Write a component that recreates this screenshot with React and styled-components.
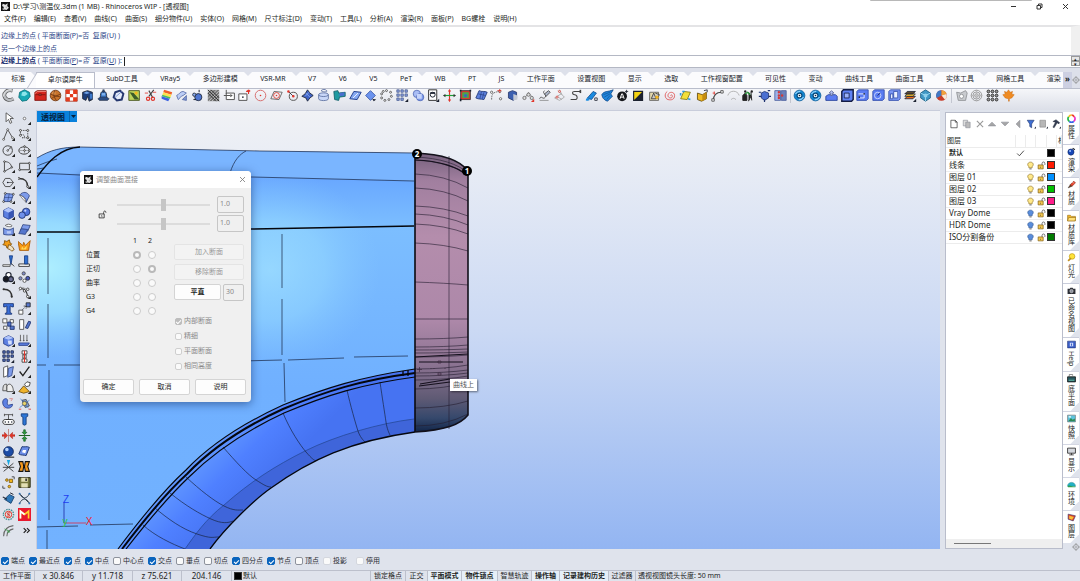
import React, { useState } from "react";
import styled, { createGlobalStyle, css } from "styled-components";

const K = "#1c2230";
const B = "#3f62c4";
const L = "#8fb0f4";
const G = "#8b8f98";
const R = "#e0352b";
const Y = "#f3b51d";
const W = "#fff";

// circle as path data
const o = (x, y, r) =>
  `M${x - r} ${y}a${r} ${r} 0 1 0 ${2 * r} 0a${r} ${r} 0 1 0 ${-2 * r} 0z`;
const dots = (list, r = 1.2) => list.map(([x, y]) => o(x, y, r)).join("");
const grid3 = dots(
  [3, 8, 13].flatMap((x) => [3, 8, 13].map((y) => [x, y])),
  1.7
);

// every icon is a list of [path, fill, stroke, stroke width]
const ICONS = {
  // standard toolbar
  pipe: [["M13 2C6 0 2 5 3 9s6 6 11 3", null, "#555", 4.6], ["M13 2C6 0 2 5 3 9s6 6 11 3", null, "#b9bcc0", 3], ["M12 1C6 0 2 5 2 9", null, "#eee", 1]],
  gem: [["M8 1l6 3 1 5-4 5-6 1-4-5 1-6z", "#19a9b4", "#0c6f79", 1], ["M5 4l4-1 3 3-4 3-4-1z", "#8be5ea"]],
  chest: [["M1 4l3-2h11v12H1z", "#d5261f", "#7d120e", 1], ["M1 6l3-3h11", null, "#f49a8e", 1], ["M2 7h12M6 6h3v2H6z", "#ffb5a8", "#7d120e", 1]],
  basketball: [[o(8, 8, 6.5), "#c8732a", "#6b3410", 1], [o(6, 5, 2), "#e9a25c"], ["M2 6c4 3 8 3 12 0M7 2c-2 4-1 8 2 12M3 12c3-3 7-4 11-2", null, "#6b3410", 1]],
  checker: [["M1 1h14v14H1z", W, "#9e2b18", 1], ["M1 1h5v5H1zM10 1h5v5h-5zM6 6h4v4H6zM1 10h5v5H1zM10 10h5v5h-5z", "#e33a1d"]],
  cylinders: [["M2 4l6-2 6 2v9l-4 2-2-6-2 5-4-2z", "#1d3f7c", K, 1], ["M3 5l4-2 4 2-4 1z", "#71a3e8"], ["M11 6h3v6h-3z", "#3c78ca"]],
  bell: [["M4 13c0-9 1-10 4-10s4 1 4 10z", "#3a76c6", K, 1], ["M1 12l3-2h8l3 2-2 2H3zM7 1h2v3H7z", "#2b4d86", K, 0.6], ["M6 5h4v3H6z", "#7fb1ec"]],
  ring: [["M4 4l6-2 4 4-2 7-6 1-4-4z", "#e5ebf8", "#26386f", 2.4], ["M3 11l9-8", null, "#6f8bd0", 1]],
  picture: [["M1 2h13v12H1z", "#bdd45c", "#3b4a12", 1], ["M2 4l5 1 7 8H8z", "#3c5c29"], [o(10, 5, 2), Y]],
  cut: [["M12 1L6 9M6 2l5 9", null, "#444", 1.4], [dots([[5, 12], [11, 12]], 2), null, R, 1.4], ["M1 5h4M11 4h4", null, R, 1]],
  rainbow: [["M5 1l10 3-1 3L4 4z", "#f0602a"], ["M4 4l10 3-1 3L3 7z", "#ffe14b"], ["M3 7l10 3-1 2L2 9z", "#4cc25a"], ["M2 9l10 3-2 3-8-3z", "#3b62e0"]],
  surf: [["M2 8c3-1 4-5 8-5l4 2-4 3c-3 0-4 4-6 5z", "#bccdf5", "#5369a6", 1], ["M9 13l5-5v6z", "#7f96d2", "#5369a6", 1]],
  balls: [[o(9, 10, 4.4), "#4f76d2", K, 1], [o(4, 7, 2), L, K, 1], ["M10 1v3M3 13h3", null, K, 1.2]],
  halftone: [["M1 1h14v14H1z", "#777"], ["M1 4l3-3M1 8l7-7M1 12L12 1M2 15L15 2M6 15l9-9M10 15l5-5", null, W, 0.7], ["M1 5l10 10M1 1l14 14M5 1l10 10", null, "#222", 1]],
  arrowBox: [["M4 5h10v8H4z", W, "#555", 1.2], ["M1 8h8M4 1v5", null, "#555", 1.2], ["M9 6l3 2-3 2z", "#555"]],
  scaleBox: [["M1 6h10v8H1z", W, "#555", 1.2], ["M13 6V1M13 1l-2 2M13 1l2 2M10 3h4", null, R, 1.4], [o(6, 10, 1), K]],
  circleRed: [[o(8, 8, 6.5), null, "#d66e6e", 1.2], [o(8, 8, 1), R]],
  diamondCircle: [["M5 3l10 1-4 9-10-1z", null, "#555", 1], [o(8, 8, 3.6), null, R, 1], [o(8, 8, 1), R]],
  circleDot: [[o(9, 9, 5), null, "#555", 1.2], ["M3 3l6 6", null, K, 1], [dots([[3, 3], [9, 9]], 1.6), R]],
  knot: [["M8 1l3 4 4 3-4 3-3 4-2-4-5-2 4-3z", B, K, 1], ["M6 5l5 5M5 9l5-5", null, L, 1]],
  cup: [["M2 7c0-3 12-3 12 0v5c0 3-12 3-12 0z", "#c9d7f8", "#566a9c", 1], ["M2 7c0 3 12 3 12 0M5 2c2-2 5-2 7 0s-5 2-7 0", null, "#566a9c", 1]],
  pipeTeal: [["M1 3l5-1 1 3 8-1v5l-7 1-1 4-5-1z", "#1f9aa0", "#135c66", 1], ["M8 5l6-1v4l-6 1z", "#4a6fd0"]],
  plane: [["M6 3l9 1-5 9-9-1z", "#85a8f2", "#24408c", 1.2], ["M5 11l6-6", null, W, 1]],
  diamond: [["M8 2l6 6-6 6-6-6z", "#6b93ee", "#3452a2", 1], ["M10 12l5 1-3 2z", K]],
  dotRing: [[dots([[8, 2], [13, 4], [14, 9], [11, 13], [6, 14], [2, 11], [2, 6], [4, 3]], 1.2), W, "#444", 1]],
  grid: [["M1 1h3v3H1zM6 1h3v3H6zM11 1h3v3h-3zM1 6h3v3H1zM6 6h3v3H6zM11 6h3v3h-3zM1 11h3v3H1zM6 11h3v3H6z", "#8fa5e2", "#35487e", 0.8], ["M15 12v4h-4z", K]],
  blobs: [[o(6, 6, 4.5), "#a9bdf4", "#5067b4", 1], [o(10, 10, 4.5), "#7f9cec", "#5067b4", 1], ["M6 6h6v6H6z", "#c6d4fa"]],
  portrait: [["M2 1h10v13H2z", W, "#333", 1.2], [o(7, 7, 3), null, K, 1.2], ["M4 4h6v2H4z", K], ["M15 12v4h-4z", K]],
  cross: [["M8 1v14", null, R, 1.4], ["M1 8h14", null, "#1c9f36", 1.4], ["M8 0l2 3H6zM8 16l2-3H6z", R], ["M0 8l3-2v4zM16 8l-3-2v4z", "#333"]],
  frame: [["M2 2h12v11H2z", "#d93b2d", "#333", 1], ["M4 4h8v7H4z", "#48a74d"], [o(8, 8, 2), "#3f62c4"], ["M1 1h2v2H1zM13 1h2v2h-2zM1 12h2v3H1z", K]],
  patch: [["M5 2c4 2 6 0 10 2l-4 9c-4-1-6 0-10-2z", "#5c80dc", "#1e3575", 1], ["M4 6l9 2M8 3L6 12M11 4l-2 8", null, "#1e3575", 0.7]],
  curve: [["M2 13c0-8 2-9 10-10", null, "#555", 1, "2 1"], [dots([[2, 4], [12, 3], [13, 12]], 1.4), W, "#555", 1], ["M9 2h5M12 0v5", null, R, 1]],
  cubeGrey: [["M3 4l5-2 5 2v7l-4 3-6-3z", "#3d60b0", "#26376b", 1], ["M9 6l5 2v5l-5 1z", "#c5cad4"]],
  beads: [["M3 12l5-8 5 7", null, "#888", 1], [dots([[3, 11], [8, 7], [12, 11]], 2), "#ddd", "#666", 1], ["M15 12v4l-4 0z", R]],
  pencil: [["M2 12c2-5 4 2 7-2s-5-4-1-8", null, "#555", 1.2], ["M8 6l5-4 2 2-5 5z", "#aab4c8", "#444", 1], ["M2 14h11", null, "#888", 1]],
  mesh: [["M2 11l8-5 4 4-6 4zM6 2l4 4M8 1l3 6M5 9l6 4", null, "#a2a2a2", 1], [dots([[8, 3], [5, 10]], 1.3), "#ddd", R, 0.8]],
  bend: [["M14 3H7c-4 0-3 4 0 4s5 6 0 6H2", null, "#444", 1.3], ["M13 1h2v4h-2z", "#444"]],
  paint: [["M3 11l7-8 4 2-6 8z", "#1a8be0", "#0d4a8d", 1], ["M1 14c0-3 2-4 4-2s-1 3-4 2z", "#1a8be0"], ["M12 11h3v3h-3z", W, K, 1]],
  fan: [["M1 7C4 2 8 4 15 1L12 6l2 3-6 6C3 13 2 11 1 7z", "#1f86dd", "#0e4687", 1], ["M3 7l8-3M4 10l7-4M7 13l4-5", null, "#0e4687", 0.7]],
  ballA: [[o(7.5, 9, 6), "#16181d"], ["M5 12l2-6h1l2 6M6 10h3", null, W, 1.2], ["M13 1v4M11 3h4", null, K, 1]],
  half: [["M2 3h11v11H2z", "#f4d313", K, 1.4], ["M13 3v11H2z", K]],
  kit: [["M2 4h11v10H2z", "#e4d9ae", "#555", 1], ["M4 12l3-7 3 7zM9 5l5 2-3 5", "#c9c9c9", "#333", 1], [o(11, 10, 2), Y]],
  spiral: [["M8 8c1-2 3 0 2 2s-6 1-5-3 8-4 8 1-4 6-8 5-5-7-1-10", null, "#e05656", 1.1]],
  note: [["M6 3l8 1-4 9-8-1z", "#f2e03a", "#7c7211", 1], ["M2 5v3M4 3h3", null, "#2e9fe0", 2], ["M11 12l3 1", null, "#2e9fe0", 2]],
  box: [["M3 5l6 2 5-3v8l-6 3-5-2z", "#f0bb22", "#5d460c", 1], ["M9 7l5-3v8l-5 3z", "#c58c10"], ["M11 2l4-1v3", null, K, 1]],
  arc: [["M3 14C3 7 6 4 13 4", null, "#444", 1.4], ["M2 5h3M4 3v4", null, R, 1], ["M12 2h3v3h-3zM1 12h3v3H1z", W, "#444", 1]],
  dome: [["M1 8c2-7 12-7 14 0M5 13c2-2 4-2 6 0", null, "#a8a8a8", 1]],
  figures: [["M1 14V8l3-3 2 3v6zM8 4l3 5-3 6M11 4l1 10", "#222", "#222", 1.2], ["M4 6l3-2 3 3", null, "#2c9a3c", 1.6], [dots([[4, 3], [12, 3]], 1.5), "#222"]],
  cubeArrows: [["M4 5l4-2 5 2v6l-5 3-4-3z", "#4a6fd2", "#1e3270", 1], ["M1 4h3M12 2h3M1 9h3M13 9h3M8 13v3", null, "#1e3270", 1.5]],
  panels: [["M1 2h7v12H1z", "#9db4ea", "#4b5f9c", 1], ["M9 2h6v12H9z", "#6a80ba", "#4b5f9c", 1], [dots([[10, 8], [6, 8], [6, 11], [6, 4]], 1.5), "#d13a3a"]],
  swirl: [[o(8, 8, 6.6), "#1285cf", "#0b5c9a", 1], [o(8, 8, 3), "#e9f6ff", "#084878", 1.4], ["M3 6c2-3 4-3 6-3M13 10c-2 3-4 3-6 3", null, "#8fd4ff", 1.4], [o(8, 8, 1), K]],
  tray: [["M1 9l3-2h9l2 2v5H1z", "#5a7cf2", "#233c94", 1], ["M8 2l3 3H9v3H7V5H5z", "#b6c4f5", "#5b6796", 1]],
  blueBox: [["M1 3l2-2h12v12l-2 2H1z", "#5f82f5", "#141d45", 1.8], ["M4 5h6v6H4z", "#9ab1fa", "#141d45", 1]],
  blueStep: [["M1 3l2-2h12v11l-2 2H1z", "#5a7cf2", "#2f4aa8", 1], ["M3 6h7v5H4", null, W, 1], [dots([[10, 6], [4, 10]], 1), K]],
  blueCircle: [["M1 3l2-2h12v11l-2 2H1z", "#5a7cf2", "#2f4aa8", 1], [o(7, 8, 4), null, "#dbe3ff", 1], ["M7 8l3-3", null, "#16235c", 1.2]],
  blueGlass: [["M1 3l2-2h12v11l-2 2H1z", "#7b97f5", "#2f4aa8", 1], ["M7 3h5v8H7zM3 6h3v6H3z", "#eaf0ff", "#2f4aa8", 1]],
  stack: [["M4 9h10l-3 3H1z", "#e96a1c", K, 1], ["M4 6h10l-3 3H1z", "#f5c332", K, 1], ["M4 3h10l-3 3H1z", "#5b4a33", K, 1], ["M15 12v4h-4z", K]],
  hex: [["M8 1l6 4v6l-6 4-6-4V5z", "#3f97c4", "#1b5c80", 1], ["M8 8l6-3M8 8L2 5M8 8v7", null, "#a7e0f6", 1], [o(8, 8, 2.5), "#8fd0ec"]],
  pie: [[o(8, 8, 6.5), "#c63d2a"], ["M8 8V1.5A6.5 6.5 0 0 0 2 11z", "#4078c4"], ["M8 8V1.5A6.5 6.5 0 0 1 14 6z", "#f0a23c"], ["M8 8l6-2a6 6 0 0 1-2 7z", "#f7e9d7"]],
  folderGrey: [["M2 4l5 1 6-3 2 3-2 9H4z", "#c9cbcf", "#8a8c90", 1], [o(8, 9, 2.5), W, "#8a8c90", 1]],
  ripples: [[o(8, 8, 6.5), null, "#8b8b8b", 1], [o(8, 8, 4.4), null, "#8b8b8b", 1], [o(8, 8, 2.2), null, "#8b8b8b", 1], ["M8 1v14M1 8h14", null, "#aaa", 0.6]],
  nine: [[grid3, "#999", "#333", 1.2]],
  maple: [["M8 1l2 3 3-1-1 3 3 1-3 4-3 1v3H8v-3l-4-1-3-4 3-1-1-3 3 1z", "#ef8b22", "#c86a10", 0.6]],

  // left toolbar
  pointer: [["M5 1v11l3-3 2 5 2-1-2-5h4z", W, "#444", 1]],
  dot: [[o(8, 8, 1.6), W, "#666", 1]],
  polyline: [["M2 14L7 2l6 10", null, "#444", 1.1], [dots([[2, 14], [7, 2], [13, 12]]), W, "#444", 0.9]],
  cpCurve: [["M3 3h9v9H5c4 0 5-4-2-4z", null, "#444", 1, "2 1"], [dots([[3, 3], [12, 3], [12, 12], [3, 9]]), W, "#333", 1]],
  circle: [[o(7, 8, 5.8), null, "#444", 1.2], ["M7 8l4-4", null, "#444", 1], [dots([[7, 8], [11, 4]], 1), W, "#444", 1]],
  ellipse: [["M1 8c0-6 13-6 13 0S1 14 1 8z", null, "#444", 1.2], ["M1 8h13M8 3v10", null, "#888", 0.8], [dots([[8, 8], [8, 3], [14, 8]], 1), W, "#333", 1]],
  sector: [["M3 14V2c6 0 8 3 9 7z", null, "#444", 1.1], [dots([[3, 2], [3, 14], [12, 9]], 1), W, "#333", 1]],
  rect: [["M2 4h12v8H2z", null, "#444", 1.2], [dots([[2, 12], [14, 4]], 1.1), W, "#333", 1]],
  polygon: [["M4 3h6l4 5-4 5H4L1 8z", null, "#444", 1.1], ["M7 8h7", null, "#444", 0.9], [o(7, 8, 1), K]],
  fillet: [["M1 3c8 0 11 3 11 11", null, "#333", 2], [dots([[1, 3], [12, 13]], 1.2), W, "#333", 1]],
  surfPts: [["M4 3l10 1-3 9-9 0z", "#7d9bea", "#2d427f", 1], ["M3 8h10M9 3L7 13", null, "#2d427f", 0.7], [dots([[4, 3], [14, 4], [2, 13], [11, 13]], 1.1), W, "#333", 1]],
  surfEdge: [["M2 5c4-5 10-4 12 1l-4 8c1-5-3-7-8-9z", "#7d9bea", "#2d427f", 1], ["M2 5c4 1 7 4 8 9l-4-4z", W, "#555", 0.8]],
  cube: [["M2 4l6-3 6 3v8l-6 3-6-3z", "#5d80e2", "#233a86", 1], ["M2 4l6-3 6 3-6 3z", "#b1c5fa"], ["M8 7l6-3v8l-6 3z", "#3655b4"]],
  spheres: [[o(10, 6, 4.6), "#5073da", "#172a66", 1], [o(5, 10, 4), "#6f90ea", "#172a66", 1], [o(9, 4.5, 1.3), "#c5d3fc"]],
  vase: [["M2 6c4 3 8 3 12 0v8c-4 1-8 1-12 0z", "#7d9bea", "#2d427f", 1], ["M4 3c2-2 6-2 8 0s-6 2-8 0", W, "#555", 1], ["M6 10h5v3H6z", "#b8c9f6"]],
  twoPlanes: [["M6 2l9 1-3 7-9-1z", "#7d9bea", "#2d427f", 1], ["M4 7l8 1-3 6-8-1z", "#5576cd", "#2d427f", 1]],
  gears: [["M3 2l3 1 3-2 1 4 2 1-3 3-3 2-1-3-4-1 2-2z", "#f39c16", "#7a4c06", 1], ["M8 7l3 1 2 2 2 3-3 2-2-2-3-1z", "#f0e2c4", "#7a4c06", 1]],
  explode: [["M2 14L0 3l6 5 1-4 2 4 6-6-2 12z", "#f89a16", "#a65600", 1], ["M4 13l1-4 2 3 4-4-1 5z", "#ffd95a"]],
  trim: [["M1 12h9v2H1z", W, "#444", 1], ["M9 1h4l-2 11z", "#2f6fd2", "#143a80", 1], ["M11 10l4 4", null, "#444", 1.2]],
  split: [["M1 11h13v3H1z", W, "#333", 1.1], ["M8 1h4v10H8z", "#2f6fd2", "#143a80", 1]],
  joinDark: [[o(8, 5, 3.2), W, K, 1.4], [o(5, 10, 3.4), "#16181f", K, 1.4], [o(11, 10, 3), "#6d6f96", K, 1.4]],
  joinLight: [[dots([[7, 3], [3, 9]], 2), "#7f8cc8", "#444", 1], [o(8, 12, 2), W, "#444", 1], [o(12, 9, 2.4), "#4a5ab8", K, 1]],
  arcDark: [["M2 4c7 0 10 3 10 10", null, "#333", 1.8], [dots([[2, 4], [12, 13]], 1.3), "#333"]],
  arcHandles: [["M3 3c7 1 8 4 9 11", null, "#333", 1.4], ["M1 6l5-4M6 2l7 3", null, "#777", 0.9], [dots([[3, 3], [8, 6], [12, 13], [12, 4]], 1.5), W, "#333", 1]],
  text: [["M2 2h12v4h-2l-1-1H10v8l2 1v1H4v-1l2-1V5H5L4 6H2z", "#3b6fd8", "#132c6c", 1]],
  move: [["M1 10h5v5H1z", W, "#444", 1], ["M10 1h5v5h-5z", "#5576cd", "#222", 1], ["M5 10l5-5M7 5h3v3", null, K, 1, "1.5 1"]],
  arrayBlocks: [["M1 1h5v5H1zM10 2h4v4h-4zM2 10h4v4H2z", W, "#444", 1], ["M7 5h4v5H7zM10 10h5v4h-5z", "#5576cd", "#1b2d66", 1]],
  book: [["M2 2h5v12H2z", W, "#444", 1], ["M9 12l4-8 3 1-4 8z", "#5576cd", "#1b2d66", 1]],
  chamfer: [["M2 5l6-3 6 3v7l-6 3-6-3z", "#5d80e2", "#233a86", 1], ["M2 5l6-3 6 3-6 2z", "#b1c5fa"], ["M7 8h5v5H8z", "#d4dffc"]],
  project: [["M1 11h13l-2 3H1z", "#5d80e2", "#233a86", 1], ["M3 1v8M7 1v8M11 1v8M2 8h2M6 8h2M10 8h2", null, "#555", 1]],
  array: [["M1 1h3v3H1zM6 1h3v3H6zM11 1h3v3h-3zM1 6h3v3H1zM6 6h3v3H6zM11 6h3v3h-3zM1 11h3v3H1zM6 11h3v3H6z", "#5674c4", "#18244a", 1], ["M15 12v4h-4z", K]],
  align: [["M5 1h6v4H5zM6 6h4v4H6zM5 11h6v4H5z", W, "#333", 1], ["M8 1v14", null, R, 1.4]],
  box2: [["M2 3l5-2v12l-5 2z", W, "#444", 1], ["M8 4l6-2-2 11-5 2z", "#7d9bea", "#2d427f", 1]],
  check: [["M2 8l4 5L14 2", null, "#222", 1.6]],
  bool: [["M1 12c0-8 2-8 5-8v8z", "#ddd", "#444", 1], ["M6 13V7c2-6 8-3 8 6z", "#eee", "#444", 1]],
  cone: [["M1 13l6-7 7 7-7 2z", "#eeb32c", "#69480a", 1], ["M8 4l3-3 4 1-1 4-4 1z", W, "#333", 1]],
  horn: [["M4 2c6 0 0 7 4 8l5-1c0 5-7 6-10 3s-3-9 1-10z", "#5d80e2", "#233a86", 1], ["M9 2h4l-2 3M2 13l2 1", null, "#d98080", 1]],
  gumball: [["M5 4l5-1 4 8-5 2z", "#7e9bd0", "#444", 1], ["M2 13L14 4M3 2l10 12", null, "#2b6fd0", 0.8], [o(8, 8, 2.6), "#e7d36a", "#555", 1], ["M1 15h3M13 15h3", null, R, 1]],
  belt: [["M4 8h8c4 0 4 6 0 6H4c-4 0-4-6 0-6z", W, "#333", 1.2], ["M3 2h10M8 2v6M3 1v3M13 1v3", null, "#444", 1], [dots([[4, 11], [12, 11], [8, 11]], 0.9), K]],
  bolt: [["M4 1h8v3l-2 1v9l-2 1-2-1V5L4 4z", "#2d76d6", "#123a78", 1]],
  squeeze: [["M8 0v16", null, "#b8766f", 1], ["M0 7h3V4l4 4-4 4V9H0zM16 7h-3V4L9 8l4 4V9h3z", "#e33427", "#9d1a10", 0.5]],
  spread: [["M1 8h14", null, "#1d5c20", 1.2], ["M7 1h2v3h2L8 7 5 4h2zM7 15h2v-3h2L8 9l-3 3h2z", "#2b9f3c", "#14591f", 0.8]],
  sphere: [[o(8, 8, 6), "#1b4ba6", "#0a1f50", 1], [o(6, 5.5, 2.2), "#b8d4ff"], ["M3 15h12", null, "#444", 1.6]],
  flag: [["M5 2c3 1 6-1 9 1l-4 10c-3-1-6 0-9-2z", "#6b8de8", "#203672", 1.2], ["M6 6l4 0-1 4-4-1z", W]],
  explodeMesh: [["M8 9L2 4M8 9l6-5M8 9L2 14M8 9l6 5M1 9h14", null, "#333", 1.1], ["M6 0h4l-2 7z", "#1aa7e0"]],
  peppers: [["M1 2h5l1 6-1 6H1l2-6zM9 2h5l-2 6 2 6H9l-1-6z", "#f5981d", "#111", 1.3]],
  points: [[dots([[6, 5], [9, 13]], 1.6), Y, "#7a5a10", 1], ["M9 4h4v4H9z", Y, "#7a5a10", 1], ["M1 12v3h3M12 1h3v3", null, "#333", 1]],
  floppy: [["M1 2h14v12H1z", "#77773e", "#2c2c14", 1.2], ["M4 2h8v5H4zM4 9h8v5H4z", "#e3dfb4"], ["M9 3h2v3H9z", "#333"]],
  net: [["M3 9l6-6 6 3-4 8z", "#2f78b8", "#153c66", 1], ["M1 6l5 3", null, K, 1.4], ["M10 1l4 2", null, K, 1.2]],
  spider: [["M2 2c3 7 9 7 12 0M2 14c3-7 9-7 12 0M3 3l10 10", null, "#345", 1.2], [dots([[2, 2], [14, 2], [2, 14], [14, 14]], 1.2), "#2d6fb5"]],
  target: [[o(8, 8, 6.3), "#d9e8ea", "#4d8f96", 1.6, "2 1"], [o(8, 8, 4), null, R, 1.2], ["M10 6H7v2h2v2H6", null, R, 1.2]],
  mLogo: [["M0 0h16v16H0z", "#e8192f"], ["M3 13V4l5 4 5-4v9", null, "#ffd52c", 2], ["M3 13V4l5 4", null, W, 2]],
  offset: [["M2 15C2 7 6 3 14 2M6 15c0-5 3-8 8-9", null, "#666", 1.3], ["M3 6l7 4M9 10l-3 0M9 10l-2-3", null, "#3b9a4c", 0.9]],
  more: [["M7 5l3 3-3 3M11 5l3 3-3 3", null, "#222", 1.4]],

  // panels and side tabs
  page: [["M3 2h7l3 3v9H3zM10 2v3h3", W, "#333", 1.1]],
  copy: [["M2 2h7v9H2z", "#ddd", G, 1], ["M6 5h7v9H6z", "#bbb", G, 1]],
  cross2: [["M3 3l10 10M13 3L3 13", null, "#9a9a9a", 1.8]],
  up: [["M2 11l6-6 6 6z", "#a6a6a6", G, 1]],
  down: [["M2 5h12l-6 6z", "#a6a6a6", G, 1]],
  left: [["M11 2v12L5 8z", "#a6a6a6", G, 1]],
  filter: [["M2 2h11L9 8v6l-3-2V8z", "#3f6fd4", "#1f3670", 1], ["M16 12v3h-3z", K]],
  sheet: [["M3 2h9v11H3z", "#b7b7b7", "#888", 1], ["M16 12v3h-3z", K]],
  hammer: [["M3 4l5-3 6 5-2 2-2-2-5 8-2-1 4-8z", "#333c52", K, 0.6], ["M16 12v3h-3z", K]],
  bulbOn: [["M5 10C1 6 4 2 8 2s7 4 3 8v2H5z", "#ffe98a", "#8a6a1a", 1.1], ["M6 13h4v2H6z", "#777"]],
  bulbOff: [["M5 10C1 6 4 2 8 2s7 4 3 8v2H5z", "#5a8ddb", "#30568f", 1.1], ["M6 13h4v2H6z", "#777"]],
  unlock: [["M2 7h9v7H2z", "#f1c64e", "#7f5d12", 1.2], ["M9 7V4c0-3 5-3 5 0v3", null, "#555", 1.4], ["M6 10h1v2H6z", "#333"]],
  lockLine: [["M2 7h9v7H2z", null, "#222", 1.4], ["M10 7V4c0-3 4-3 4 0v1M6 10h1v2", null, "#222", 1.3]],
  tick: [["M2 8l4 4 8-9", null, "#333", 1.5]],
  rainbowRing: [["M8 2a6 6 0 0 1 5 3", null, "#ee3b2a", 3], ["M13 5a6 6 0 0 1-1 8", null, "#f032c8", 3], ["M12 13a6 6 0 0 1-8 0", null, "#3763e8", 3], ["M4 13a6 6 0 0 1-1-8", null, "#25b64b", 3], ["M3 5a6 6 0 0 1 5-3", null, "#f3c623", 3]],
  render: [[o(7, 9, 5.5), "#1747b8", "#0b2259", 1], [o(5.5, 7, 1.8), "#9fc2ff"], ["M10 2l4 3", null, K, 2]],
  brush: [["M2 14l4-6 3 3z", "#7a3f1d", "#333", 0.8], ["M6 8l6-6 3 3-6 6z", "#e8482f", "#7d1a10", 1], ["M9 3l3 3", null, W, 1]],
  folder: [["M1 4h5l2 2h7v8H1z", "#f0b429", "#93690e", 1], ["M3 8h13l-2 6H1z", "#ffe07b", "#93690e", 1]],
  lamp: [[o(9, 6, 5), "#ffe338", "#b38b0d", 1], ["M2 14l5-5", null, "#c09020", 3]],
  camera: [["M1 5h4l1-2h4l1 2h4v9H1z", "#2c2f36"], [o(8, 9, 3), "#8b909c", W, 0.8]],
  help: [["M1 2h14v12H1z", "#3b5fc8", "#1d3170", 1], ["M5 5h6v6H5z", "#d4defb"], ["M7 6h2v4H7z", "#3b5fc8"]],
  ground: [["M1 5h14v9H1z", "#2a5a62", "#111", 1.4], ["M3 10h10v2H3z", "#5fb8a6"], ["M4 4V1h6v2", null, "#333", 1]],
  shot: [["M1 2h14v12H1z", "#5cc3dd", "#777", 1.2], ["M2 13l5-6 3 3 4-2v5z", "#2d8a55"], ["M3 4h4v2H3z", W]],
  monitor: [["M1 2h14v9H1z", "#d5d8de", "#222", 1.4], ["M8 11v3M4 14h8", null, "#222", 1.4]],
  env: [["M1 11C1 2 15 2 15 11z", "#22b2c4", "#127a88", 0.8], ["M1 11c4-4 6 2 14 0v2H2z", "#2f9f50"]],
  layers: [["M2 2l13 3-4 9-9-3z", "#e3452a", "#222b66", 1], ["M4 5l8 2-3 5-5-2z", "#f9c339"]],
  rhino: [["M0 0h16v16H0z", "#111"], ["M3 3l5 2 4-3-1 5 3 3-4 4-6-1 1-4-3-2z", "#e6e6e6"], ["M8 8l3 1-2 2zM2 12l4 2", "#111", W, 1]],
  gear: [[o(8, 8, 5), null, "#888", 1.4], [o(8, 8, 2), null, "#888", 1], ["M8 0v3M8 13v3M0 8h3M13 8h3", null, "#888", 1.4]],
};

const TOP_TOOLS =
  "pipe gem chest basketball checker cylinders bell ring picture cut rainbow surf balls halftone arrowBox scaleBox circleRed diamondCircle circleDot knot cup pipeTeal plane diamond dotRing grid blobs portrait cross frame patch curve cubeGrey beads pencil mesh bend paint fan ballA half kit spiral note box arc dome figures cubeArrows panels | swirl swirl tray blueBox blueStep blueCircle blueGlass stack hex pie | folderGrey ripples nine maple".split(
    " "
  );

const SIDE_TOOLS =
  "pointer dot polyline cpCurve circle ellipse sector rect polygon fillet surfPts surfEdge cube spheres vase twoPlanes gears explode trim split joinDark joinLight arcDark arcHandles text move arrayBlocks book chamfer project array align box2 check bool cone horn gumball belt bolt squeeze spread sphere flag explodeMesh peppers points floppy net spider target mLogo offset more".split(
    " "
  );

const WITH_FLYOUT =
  "dot polyline cpCurve circle ellipse sector rect polygon fillet surfPts surfEdge cube spheres vase twoPlanes joinDark arcHandles move chamfer project align box2 check bool cone".split(
    " "
  );

const MENU =
  "文件(F) 编辑(E) 查看(V) 曲线(C) 曲面(S) 细分物件(U) 实体(O) 网格(M) 尺寸标注(D) 变动(T) 工具(L) 分析(A) 渲染(R) 面板(P) BG螺栓 说明(H)".split(
    " "
  );

const TABS =
  "标准 卓尔谟犀牛 SubD工具 VRay5 多边形建模 VSR-MR V7 V6 V5 PeT WB PT JS 工作平面 设置视图 显示 选取 工作视窗配置 可见性 变动 曲线工具 曲面工具 实体工具 网格工具 渲染".split(
    " "
  );

const LAYERS = [
  { name: "默认", color: "#000", current: true },
  { name: "线条", color: "#ff1a00", bulb: "bulbOn" },
  { name: "图层 01", color: "#0090ff", bulb: "bulbOn" },
  { name: "图层 02", color: "#00c000", bulb: "bulbOn" },
  { name: "图层 03", color: "#ff1c8a", bulb: "bulbOn" },
  { name: "Vray Dome", color: "#000", bulb: "bulbOff" },
  { name: "HDR Dome", color: "#000", bulb: "bulbOff" },
  { name: "ISO分割备份", color: "#007a00", bulb: "bulbOff" },
];

const SIDE_TABS = [
  ["rainbowRing", "属性"],
  ["render", "渲染"],
  ["brush", "材质"],
  ["folder", "材质库"],
  ["lamp", "灯光"],
  ["camera", "已命名视图"],
  ["help", "Help"],
  ["ground", "底平面"],
  ["shot", "快照"],
  ["monitor", "显示"],
  ["env", "环境"],
  ["layers", "图层"],
];

const OSNAPS = [
  ["端点", true],
  ["最近点", true],
  ["点", true],
  ["中点", true],
  ["中心点", false],
  ["交点", true],
  ["垂点", false],
  ["切点", false],
  ["四分点", true],
  ["节点", true],
  ["顶点", false],
];

const Icon = ({ name, size = 13 }) => (
  <svg width={size} height={size} viewBox="0 0 16 16" aria-hidden="true">
    {ICONS[name].map(([d, fill, stroke, width, dash], i) => (
      <path
        key={i}
        d={d}
        fill={fill || "none"}
        stroke={stroke || "none"}
        strokeWidth={width}
        strokeDasharray={dash}
      />
    ))}
    {WITH_FLYOUT.includes(name) && <path d="M16 12v4h-4z" fill="#222" />}
  </svg>
);

const BlendDialog = () => {
  const [first, setFirst] = useState("位置");
  const [second, setSecond] = useState("正切");

  return (
    <Dialog role="dialog" aria-label="调整曲面混接">
      <DialogTitle>
        <Icon name="rhino" size={9} />
        <span>调整曲面混接</span>
        <CloseButton aria-label="关闭">
          <svg width="7" height="7" viewBox="0 0 7 7">
            <path d="M1 1l5 5M6 1L1 6" stroke="#777" strokeWidth="0.8" />
          </svg>
        </CloseButton>
      </DialogTitle>
      <DialogBody>
        <SliderArea>
          <LockButton aria-label="锁定">
            <Icon name="lockLine" size={9} />
          </LockButton>
          <Sliders>
            <Slider type="range" disabled defaultValue="50" aria-label="滑块 1" />
            <NumberBox disabled defaultValue="1.0" aria-label="数值 1" />
            <Slider type="range" disabled defaultValue="50" aria-label="滑块 2" />
            <NumberBox disabled defaultValue="1.0" aria-label="数值 2" />
          </Sliders>
        </SliderArea>
        <Options>
          <Continuity>
            <span />
            <ColumnHead>1</ColumnHead>
            <ColumnHead>2</ColumnHead>
            {["位置", "正切", "曲率", "G3", "G4"].map((label) => (
              <React.Fragment key={label}>
                <span>{label}</span>
                <Radio
                  name="edge1"
                  aria-label={`${label} 1`}
                  checked={first === label}
                  onChange={() => setFirst(label)}
                />
                <Radio
                  name="edge2"
                  aria-label={`${label} 2`}
                  checked={second === label}
                  onChange={() => setSecond(label)}
                />
              </React.Fragment>
            ))}
          </Continuity>
          <Sections>
            <DialogButton disabled>加入断面</DialogButton>
            <DialogButton disabled>移除断面</DialogButton>
            <FlatRow>
              <DialogButton $strong>平直</DialogButton>
              <AngleBox disabled defaultValue="30" aria-label="角度" />
            </FlatRow>
            <Checks>
              {["内部断面", "精细", "平面断面", "相同高度"].map((label, i) => (
                <CheckLabel key={label} $muted>
                  <CheckBox disabled defaultChecked={i === 0} />
                  {label}
                </CheckLabel>
              ))}
            </Checks>
          </Sections>
        </Options>
        <DialogFooter>
          <DialogButton>确定</DialogButton>
          <DialogButton>取消</DialogButton>
          <DialogButton>说明</DialogButton>
        </DialogFooter>
      </DialogBody>
    </Dialog>
  );
};

// isocurves of the blend surface: [left y, right y]
const ISO = [
  [160, 174], [174, 188], [188, 201], [206, 216], [214, 225], [224, 234],
  [243, 251], [282, 285], [319, 319], [339, 337], [347, 345], [350, 349],
  [353, 352], [357, 355], [369, 365], [373, 370], [376, 373], [380, 376],
  [389, 382], [408, 401], [426, 414],
];

const Scene = () => (
  <svg
    width="100%"
    height="100%"
    viewBox="37 111 903 438"
    preserveAspectRatio="xMinYMin slice"
    fill="none"
  >
    <defs>
      <linearGradient id="bg" x1="0" y1="0" x2="0" y2="1">
        <stop offset="0" stopColor="#f1f2f5" />
        <stop offset="0.5" stopColor="#cbd9f4" />
        <stop offset="1" stopColor="#93b5f2" />
      </linearGradient>
      <linearGradient id="body" x1="0" y1="147" x2="0" y2="549" gradientUnits="userSpaceOnUse">
        <stop offset="0" stopColor="#7cb5ff" />
        <stop offset="0.08" stopColor="#69a8ff" />
        <stop offset="0.2" stopColor="#7cbeff" />
        <stop offset="0.6" stopColor="#70b0ff" />
        <stop offset="1" stopColor="#72b2ff" />
      </linearGradient>
      <radialGradient id="glow">
        <stop offset="0" stopColor="#aeefff" />
        <stop offset="0.5" stopColor="#9fe4ff" stopOpacity="0.75" />
        <stop offset="1" stopColor="#8ccfff" stopOpacity="0" />
      </radialGradient>
      <linearGradient id="band" x1="200" y1="450" x2="250" y2="500" gradientUnits="userSpaceOnUse">
        <stop offset="0" stopColor="#639bff" />
        <stop offset="0.5" stopColor="#4f80ff" />
        <stop offset="1" stopColor="#4673f2" />
      </linearGradient>
      <linearGradient id="blend" x1="0" y1="153" x2="0" y2="432" gradientUnits="userSpaceOnUse">
        <stop offset="0" stopColor="#75607c" />
        <stop offset="0.1" stopColor="#a17f9f" />
        <stop offset="0.3" stopColor="#b48dac" />
        <stop offset="0.6" stopColor="#ad88a9" />
        <stop offset="0.76" stopColor="#8b7391" />
        <stop offset="0.88" stopColor="#5f5a74" />
        <stop offset="0.95" stopColor="#35486c" />
        <stop offset="1" stopColor="#122548" />
      </linearGradient>
    </defs>
    <path d="M0 111H2400V549H0z" fill="url(#bg)" />
    <path
      d="M37 158C50 150 62 147 80 147L260 151L415 153V369C360 377 325 388 283 405C235 427 205 450 186 470C165 489 145 513 118 549H37z"
      fill="url(#body)"
    />
    <ellipse cx="46" cy="268" rx="130" ry="90" fill="url(#glow)" />
    <ellipse cx="270" cy="270" rx="110" ry="100" fill="url(#glow)" opacity="0.55" />
    <path d="M37 158C50 150 62 147 80 147L260 151L415 153V181L252 177L37 173z" fill="#7ab5ff" />
    <path
      d="M415 369C360 377 325 388 283 405C235 427 205 450 186 470C165 489 145 513 118 549H210C225 528 255 499 271 488C310 460 350 441 415 432z"
      fill="url(#band)"
    />
    <path
      d="M414 419C380 423 335 436 305 451C275 466 250 482 224 505C205 520 195 535 185 549H210C225 528 255 499 271 488C310 460 350 441 415 432z"
      fill="#3f65da"
    />
    <path d="M414 419C380 423 335 436 305 451C275 466 250 482 224 505C205 520 195 535 185 549" stroke="#23458f" strokeWidth="0.7" />

    <g stroke="#182544" strokeWidth="0.7">
      <path d="M37 158C50 150 62 147 80 147L260 151L415 153M37 173L80 175L252 177L414 181" />
      <path d="M37 166C44 163 50 161 57 159M37 169L44 168M230 173C234 160 240 154 246 151" />
      <path d="M48 238V294M48 304V358M49 370V520M47 530V549" />
      <path d="M282 234V288M282 299V355M284 363L285 402" />
      <path d="M37 365H46M54 365L80 365L282 360M288 360L344 358M354 357L408 356M37 527L78 526M90 525L133 524" />
      <path d="M283 413C290 430 300 445 306 452S314 460 316 461M347 390C350 404 356 425 358 431S363 440 365 442M380 382C382 396 385 415 386 422S389 433 390 435" />
      <path d="M223 447C236 462 248 475 256 480S267 487 271 487M186 477C200 490 214 501 224 506S238 510 243 510M170 493C186 506 200 514 211 519S228 523 233 521M155 508C168 519 182 529 197 534S212 537 219 537M143 525C155 536 172 544 185 549" />
    </g>
    <g stroke="#05070d">
      <path d="M37 177C48 162 60 148 80 147M37 232L80 232L252 229L414 226" strokeWidth="1.4" />
      <path d="M415 369C360 377 325 388 283 405C235 427 205 450 186 470C165 489 145 513 118 549" strokeWidth="1.1" />
      <path d="M415 373C361 380 326 391 283 409C237 430 207 453 187 474C168 491 148 515 122 549" strokeWidth="2" />
      <path d="M415 377C362 384 327 395 284 413C239 434 209 457 189 477C171 494 151 517 126 549" strokeWidth="1.2" />
      <path d="M210 549C225 528 255 499 271 488C310 460 350 441 415 432M403 371V376M408 370V376" strokeWidth="1.3" />
    </g>

    <path d="M415 153C440 154 460 160 468 171V415C460 425 445 430 415 432z" fill="url(#blend)" />
    <g stroke="#241c2f" strokeWidth="0.6">
      {ISO.map(([a, b]) => (
        <path key={a} d={`M415 ${a}Q445 ${a + (b > a ? 1 : 0)} 468 ${b}`} />
      ))}
      <path d="M415 157C440 158 458 164 468 173M449 156V429" />
    </g>
    <path d="M415 160C440 161 458 167 466 175M419 362H463M415 357L468 354M419 386L450 382M420 384L450 379" stroke="#15101d" strokeWidth="1.2" />
    <path d="M438 361h3v2h-3zM438 373h3v2h-3zM417 369.500h5M419.500 367v5M431 368v1M434 368v1M445 368v1" stroke="#3c2a40" strokeWidth="0.7" />
    <path d="M415 153V432" stroke="#0b0a10" strokeWidth="1.6" />
    <path d="M415 153C440 154 460 160 468 171V415C460 425 445 430 415 432" stroke="#12101a" strokeWidth="1.6" />

    <circle cx="417" cy="154" r="5" fill="#000" />
    <circle cx="467" cy="171" r="5" fill="#000" />
    <SceneText x="417" y="157" fill="#fff">2</SceneText>
    <SceneText x="467" y="174" fill="#fff">1</SceneText>

    <path d="M64 523V502" stroke="#2d45b4" />
    <path d="M64 523H86" stroke="#c8446a" />
    <AxisText x="66" y="503" fill="#1f3ff0">Z</AxisText>
    <AxisText x="89" y="525" fill="#f0202a">X</AxisText>
    <AxisText x="65" y="525" fill="#1fc445">y</AxisText>
  </svg>
);

export default function App() {
  const [tab, setTab] = useState("卓尔谟犀牛");

  return (
    <Window>
      <GlobalStyle />
      <TitleBar>
        <Icon name="rhino" size={9} />
        <TitleText>D:\学习\测温仪.3dm (1 MB) - Rhinoceros WIP - [透视图]</TitleText>
        <ShareHandle />
        <WindowButton aria-label="最小化">
          <svg width="7" height="7" viewBox="0 0 7 7"><path d="M1 3.500h5" stroke="#333" /></svg>
        </WindowButton>
        <WindowButton aria-label="还原">
          <svg width="7" height="7" viewBox="0 0 7 7">
            <path d="M1 2.500h3.500V6H1zM2.500 2V1H6v3.500H5" fill="none" stroke="#333" />
          </svg>
        </WindowButton>
        <WindowButton aria-label="关闭">
          <svg width="7" height="7" viewBox="0 0 7 7"><path d="M1 1l5 5M6 1L1 6" stroke="#333" /></svg>
        </WindowButton>
      </TitleBar>
      <MenuBar>
        {MENU.map((item) => (
          <button key={item}>{item}</button>
        ))}
      </MenuBar>

      <History>
        <p>边缘上的点 ( 平面断面(P)=否&nbsp; 复原(U) )</p>
        <p>另一个边缘上的点</p>
      </History>
      <Prompt>
        <label htmlFor="command">
          <b>边缘上的点</b> ( 平面断面(<u>P</u>)=<i>否</i>&nbsp; 复原(<u>U</u>) ):
        </label>
        <Caret />
        <CommandInput id="command" />
        <Spinner>
          <button aria-label="上一个">▴</button>
          <button aria-label="下一个">▾</button>
        </Spinner>
      </Prompt>

      <TabBar>
        <TabList>
          {TABS.map((name) => (
            <Tab key={name} $active={name === tab} onClick={() => setTab(name)}>
              {name}
            </Tab>
          ))}
        </TabList>
        <MoreTabs aria-label="更多">»</MoreTabs>
        <IconButton aria-label="选项">
          <Icon name="gear" size={8} />
        </IconButton>
      </TabBar>
      <ToolBar>
        {TOP_TOOLS.map((name, i) =>
          name === "|" ? (
            <Divider key={i} />
          ) : (
            <IconButton key={i} aria-label={name}>
              <Icon name={name} />
            </IconButton>
          )
        )}
      </ToolBar>

      <Main>
        <SideBar>
          {SIDE_TOOLS.map((name) => (
            <IconButton key={name} aria-label={name}>
              <Icon name={name} />
            </IconButton>
          ))}
        </SideBar>
        <Viewport>
          <Scene />
          <ViewLabel>
            <button>透视图</button>
            <button aria-label="视图菜单">
              <svg width="5" height="4" viewBox="0 0 5 4"><path d="M0 0h5L2.500 3z" fill="#04203c" /></svg>
            </button>
          </ViewLabel>
          <BlendDialog />
          <Tooltip>曲线上</Tooltip>
        </Viewport>
        <Panel>
          <PanelTools>
            {["page", "copy", "cross2", "up", "down", "left", "filter", "sheet", "hammer"].map((name) => (
              <IconButton key={name} aria-label={name}>
                <Icon name={name} size={10} />
              </IconButton>
            ))}
          </PanelTools>
          <LayerTable>
            <thead>
              <tr>
                <th>图层</th>
                <th />
                <th />
                <th />
                <th />
                <th>材</th>
              </tr>
            </thead>
            <tbody>
              {LAYERS.map((layer) => (
                <tr key={layer.name}>
                  <LayerName $current={layer.current}>{layer.name}</LayerName>
                  <td>{layer.current && <Icon name="tick" size={9} />}</td>
                  <td>{layer.bulb && <Icon name={layer.bulb} size={9} />}</td>
                  <td>{layer.bulb && <Icon name="unlock" size={9} />}</td>
                  <td>
                    <Swatch $color={layer.color} />
                  </td>
                  <td />
                </tr>
              ))}
            </tbody>
          </LayerTable>
          <ScrollTrack>
            <ScrollThumb />
          </ScrollTrack>
        </Panel>
        <SideTabs>
          {SIDE_TABS.map(([icon, label]) => (
            <SideTab key={label}>
              <Icon name={icon} size={9} />
              <span>{label}</span>
            </SideTab>
          ))}
          <PanelOptions aria-label="面板选项">
            <Icon name="gear" size={8} />
          </PanelOptions>
        </SideTabs>
      </Main>

      <OsnapBar>
        {OSNAPS.map(([label, on]) => (
          <CheckLabel key={label}>
            <CheckBox defaultChecked={on} />
            {label}
          </CheckLabel>
        ))}
        <CheckLabel>
          <CheckBox $faint />
          投影
        </CheckLabel>
        <LastSnap>
          <CheckLabel>
            <CheckBox $faint />
            停用
          </CheckLabel>
        </LastSnap>
      </OsnapBar>
      <StatusBar>
        <StatusCell $w={35}>工作平面</StatusCell>
        <StatusCell $w={48} $number>x 30.846</StatusCell>
        <StatusCell $w={50} $number>y 11.718</StatusCell>
        <StatusCell $w={49} $number>z 75.621</StatusCell>
        <StatusCell $w={50} $number>204.146</StatusCell>
        <StatusCell $w={139} $left>
          <Swatch $color="#000" />
          默认
        </StatusCell>
        <StatusCell $w={35}>锁定格点</StatusCell>
        <StatusCell $w={22}>正交</StatusCell>
        <StatusCell $w={34} $on>平面模式</StatusCell>
        <StatusCell $w={36} $on>物件锁点</StatusCell>
        <StatusCell $w={34}>智慧轨迹</StatusCell>
        <StatusCell $w={28} $on>操作轴</StatusCell>
        <StatusCell $w={49} $on>记录建构历史</StatusCell>
        <StatusCell $w={27}>过滤器</StatusCell>
        <LensLength>透视视图镜头长度: 50 mm</LensLength>
      </StatusBar>
    </Window>
  );
}

const GlobalStyle = createGlobalStyle`
  * {
    box-sizing: border-box;
  }
  body {
    margin: 0;
    overflow: hidden;
  }
  body, button, input, table {
    font-family: "Noto Sans", "Noto Sans CJK SC", sans-serif;
    font-size: 7px;
    line-height: 10px;
    color: #1d1f24;
  }
  button {
    padding: 0;
    border: 0;
    background: none;
    white-space: nowrap;
  }
  p {
    margin: 0;
  }
  svg {
    display: block;
    flex: none;
  }
`;

const Window = styled.div`
  display: flex;
  flex-direction: column;
  height: 100vh;
  background: #dfe3ec;
`;

const TitleBar = styled.header`
  display: flex;
  align-items: center;
  height: 13px;
  padding: 0 11px 0 1px;
  gap: 3px;
  background: #fff;
`;

const TitleText = styled.span`
  flex: 1;
`;

const ShareHandle = styled.div`
  position: absolute;
  top: 0;
  right: 48px;
  width: 162px;
  height: 1px;
  background: #b8b8b8;
  border-radius: 0 0 3px 3px;
`;

const WindowButton = styled.button`
  display: grid;
  place-items: center;
  width: 7px;
  margin-left: 16px;
`;

const MenuBar = styled.nav`
  display: flex;
  align-items: center;
  gap: 8px;
  height: 12px;
  padding-left: 4px;
  background: #fff;
`;

const History = styled.section`
  height: 30px;
  padding: 2px 1px 0;
  border-top: 2px solid #e4e4e6;
  border-right: 9px solid #f0f0f0;
  background: #fff;
  color: #2b4487;

  p {
    line-height: 13px;
  }
`;

const Prompt = styled.div`
  display: flex;
  align-items: center;
  height: 13px;
  padding: 0 0 1px 1px;
  border: solid #b4b8c4;
  border-width: 1px 0;
  background: #fff;
  color: #2b4487;

  b {
    color: #14296b;
  }
`;

const Caret = styled.span`
  width: 1px;
  height: 9px;
  margin-left: 2px;
  background: #222;
`;

const CommandInput = styled.input`
  flex: 1;
  min-width: 0;
  height: 10px;
  border: 0;
  outline: 0;
  padding: 0;
`;

const Spinner = styled.div`
  display: grid;
  width: 9px;
  background: #e6e6e6;

  button {
    height: 5px;
    font-size: 5px;
    line-height: 5px;
    border: 1px solid #999;
  }
`;

const TabBar = styled.div`
  display: flex;
  height: 21px;
  padding-top: 4px;
  border-bottom: 1px solid #b9bdcb;
  background: #dde0ea;
`;

const TabList = styled.div`
  display: flex;
  flex: 1;
  min-width: 0;
  margin-right: -9px;
  overflow: hidden;
  background: #fbfbfd;
`;

const Tab = styled.button`
  position: relative;
  flex: 1 0 auto;
  padding: 0 10px 2px;
  color: #22252c;

  &::after {
    content: "";
    position: absolute;
    top: 0;
    right: -3px;
    border: solid transparent;
    border-width: 0 4px;
    border-top: 4px solid #dde0ea;
  }

  ${({ $active }) =>
    $active &&
    css`
      background: #fff;
      border-top: 1px solid #b9bdcb;
      border-right: 1px solid #b9bdcb;

      &::before {
        content: "";
        position: absolute;
        top: 0;
        left: -5px;
        height: 17px;
        border-left: 1px solid #b9bdcb;
        transform: skewX(-32deg);
      }
      &::after {
        display: none;
      }
    `}
`;

const MoreTabs = styled.button`
  position: relative;
  width: 9px;
  padding-bottom: 2px;
  background: #cdd0e2;
  font-size: 8px;
  font-weight: 700;
`;

const IconButton = styled.button`
  display: grid;
  place-items: center;
`;

const ToolBar = styled.div`
  display: flex;
  justify-content: space-between;
  align-items: flex-start;
  height: 21px;
  padding: 0 6% 0 2px;
  background: linear-gradient(#f5f6f9, #dcdfe8);
`;

const Divider = styled.span`
  width: 1px;
  height: 14px;
  background: #c3c6d0;
`;

const Main = styled.main`
  display: flex;
  flex: 1;
  min-height: 0;
`;

const SideBar = styled.aside`
  display: grid;
  grid-template-columns: 1fr 1fr;
  grid-auto-rows: 1fr;
  width: 37px;
  padding: 1px 4px 11px 0;
  border-right: 1px solid #c9cddb;
`;

const Viewport = styled.section`
  position: relative;
  flex: 1;
  min-width: 0;
  overflow: hidden;
  border-top: 1px solid #c9cddb;
`;

const SceneText = styled.text`
  font-size: 8px;
  font-weight: 700;
  text-anchor: middle;
`;

const AxisText = styled.text`
  font-family: "Liberation Sans", sans-serif;
  font-size: 10px;
  text-anchor: middle;
`;

const ViewLabel = styled.div`
  position: absolute;
  top: 0;
  left: 0;
  display: flex;
  height: 11px;
  background: #0a82dc;

  button {
    display: grid;
    place-items: center;
    padding: 0 4px;
    font-size: 8px;
    font-weight: 700;
    color: #04203c;
  }
  button + button {
    padding: 0 1px;
    border-left: 1px solid #0765ae;
  }
`;

const Tooltip = styled.div`
  position: absolute;
  top: 268px;
  left: 413px;
  padding: 1px 3px;
  background: #fff;
  box-shadow: 1px 1px 2px rgba(0, 0, 0, 0.5);
  color: #555;
`;

const Dialog = styled.section`
  position: absolute;
  top: 60px;
  left: 43px;
  width: 171px;
  border-radius: 4px;
  background: #f0f0f0;
  box-shadow: 0 2px 10px rgba(10, 30, 80, 0.5);
  overflow: hidden;
`;

const DialogTitle = styled.header`
  display: flex;
  align-items: center;
  gap: 3px;
  height: 17px;
  padding: 0 5px 0 4px;
  background: #fff;
  color: #888;
`;

const CloseButton = styled.button`
  margin-left: auto;
`;

const DialogBody = styled.div`
  padding: 8px 5px 7px 3px;
`;

const SliderArea = styled.div`
  display: flex;
  align-items: center;
  padding-right: 2px;
`;

const LockButton = styled.button`
  margin: 0 10px 0 15px;
`;

const Sliders = styled.div`
  flex: 1;
  display: grid;
  grid-template-columns: 1fr 27px;
  align-items: center;
  gap: 2px 7px;
`;

const Slider = styled.input`
  appearance: none;
  width: 100%;
  height: 12px;
  margin: 0;
  background: linear-gradient(#dcdcdc, #dcdcdc) center / 100% 2px no-repeat;

  &::-webkit-slider-thumb {
    appearance: none;
    width: 5px;
    height: 12px;
    background: #c6c6c6;
  }
`;

const NumberBox = styled.input`
  width: 27px;
  height: 17px;
  padding: 0 2px 3px;
  border: 1px solid #c6c6c6;
  border-radius: 2px;
  background: #f0f0f0;
  color: #888;
`;

const AngleBox = styled(NumberBox)`
  width: 21px;
`;

const Options = styled.div`
  display: flex;
  justify-content: space-between;
  padding: 2px 2px 0 3px;
`;

const Continuity = styled.div`
  display: grid;
  grid-template-columns: 43px 15px 15px;
  grid-auto-rows: 14px;
  align-items: center;
  align-content: start;
`;

const ColumnHead = styled.span`
  padding-left: 4px;
`;

const Radio = styled.input.attrs({ type: "radio" })`
  appearance: none;
  width: 8px;
  height: 8px;
  margin: 0 0 0 4px;
  border: 1px solid #cbcbcb;
  border-radius: 50%;
  background: #fafafa;

  &:checked {
    border: 2px solid #b9b9b9;
  }
`;

const Sections = styled.div`
  display: flex;
  flex-direction: column;
  gap: 4px;
  width: 70px;
  padding-top: 10px;
`;

const DialogButton = styled.button`
  flex: 1 1 16px;
  height: 16px;
  border: 1px solid #d4d4d4;
  border-radius: 2px;
  background: #fdfdfd;
  font-weight: ${({ $strong }) => ($strong ? 700 : 400)};

  &:disabled {
    border-color: #e4e4e4;
    background: #f3f3f3;
    color: #999;
  }
`;

const FlatRow = styled.div`
  display: flex;
  gap: 2px;
`;

const Checks = styled.div`
  display: flex;
  flex-direction: column;
  gap: 5px;
  padding: 11px 0 0 1px;
`;

const CheckLabel = styled.label`
  display: flex;
  align-items: center;
  gap: 2px;
  white-space: nowrap;
  color: ${({ $muted }) => ($muted ? "#8a8a8a" : "#2a2c32")};
`;

const CheckBox = styled.input.attrs({ type: "checkbox" })`
  appearance: none;
  flex: none;
  display: grid;
  place-items: center;
  width: 8px;
  height: 8px;
  margin: 0;
  border: 1px solid ${({ $faint }) => ($faint ? "#d4d7de" : "#8d929c")};
  border-radius: 2px;
  background: #fafafa;

  &:checked {
    border-color: #0a64bd;
    background: #0a64bd;
  }
  &:checked::after {
    content: "";
    width: 4px;
    height: 2px;
    border: solid #fff;
    border-width: 0 0 1px 1px;
    transform: rotate(-45deg);
  }
  &:disabled {
    width: 7px;
    height: 7px;
    border-color: #cfcfcf;
  }
  &:disabled:checked {
    background: #bdbdbd;
    border-color: #bdbdbd;
  }
`;

const DialogFooter = styled.footer`
  display: flex;
  gap: 5px;
  padding-top: 8px;
`;

const Panel = styled.section`
  display: flex;
  flex-direction: column;
  width: 118px;
  margin: 2px 0 0 5px;
  border: 1px solid #b9bdcb;
  background: #fff;
`;

const PanelTools = styled.div`
  display: flex;
  justify-content: space-between;
  padding: 6px 1px 6px 3px;
`;

const LayerTable = styled.table`
  width: 100%;
  border-collapse: collapse;
  table-layout: fixed;

  th,
  td {
    height: 12px;
    padding: 0 0 0 1px;
    border-bottom: 1px solid #ececec;
    overflow: hidden;
    white-space: nowrap;
  }
  th {
    font-weight: 400;
    text-align: left;
    border-right: 1px solid #ececec;
  }
  th:first-child {
    width: 69px;
  }
  th:last-child {
    width: 5px;
  }
`;

const LayerName = styled.td`
  && {
    padding-left: 3px;
    font-size: ${({ $current }) => ($current ? "7px" : "8px")};
    font-weight: ${({ $current }) => ($current ? 700 : 400)};
  }
`;

const Swatch = styled.span`
  display: inline-block;
  vertical-align: middle;
  width: 8px;
  height: 8px;
  border: 1px solid #333;
  background: ${({ $color }) => $color};
`;

const ScrollTrack = styled.div`
  height: 9px;
  margin-top: auto;
  padding: 4px 8px;
  background: #efefef;
`;

const ScrollThumb = styled.div`
  width: 37px;
  height: 1px;
  background: #777;
`;

const SideTabs = styled.nav`
  display: flex;
  flex-direction: column;
  width: 17px;
  padding-top: 2px;
`;

const SideTab = styled.button`
  display: flex;
  flex-direction: column;
  align-items: center;
  gap: 2px;
  width: 16px;
  padding: 2px 0 5px;
  background: #fff;
  clip-path: polygon(0 0, 100% 0, 100% calc(100% - 9px), 45% 100%, 0 100%);

  span {
    writing-mode: vertical-rl;
    line-height: 9px;
  }

  & + & {
    border-top: 1px solid #c9cddb;
  }
`;

const PanelOptions = styled.button`
  margin: auto 0 0 auto;
`;

const OsnapBar = styled.div`
  display: flex;
  align-items: center;
  gap: 4px;
  height: 21px;
  padding: 3px 1px 0;
`;

const LastSnap = styled.div`
  margin-left: 5px;
`;

const StatusBar = styled.footer`
  display: flex;
  height: 11px;
  border-top: 1px solid #bcc0cc;
  white-space: nowrap;
`;

const StatusCell = styled.span`
  display: flex;
  align-items: center;
  justify-content: ${({ $left }) => ($left ? "flex-start" : "center")};
  gap: 1px;
  width: ${({ $w }) => $w}px;
  padding-left: ${({ $left }) => ($left ? 2 : 0)}px;
  border-right: 1px solid #bcc0cc;
  background: ${({ $on }) => ($on ? "#e6eff8" : "transparent")};
  font-weight: ${({ $on }) => ($on ? 700 : 400)};
  font-size: ${({ $number }) => ($number ? 8 : 7)}px;
`;

const LensLength = styled.span`
  padding-left: 2px;
`;
